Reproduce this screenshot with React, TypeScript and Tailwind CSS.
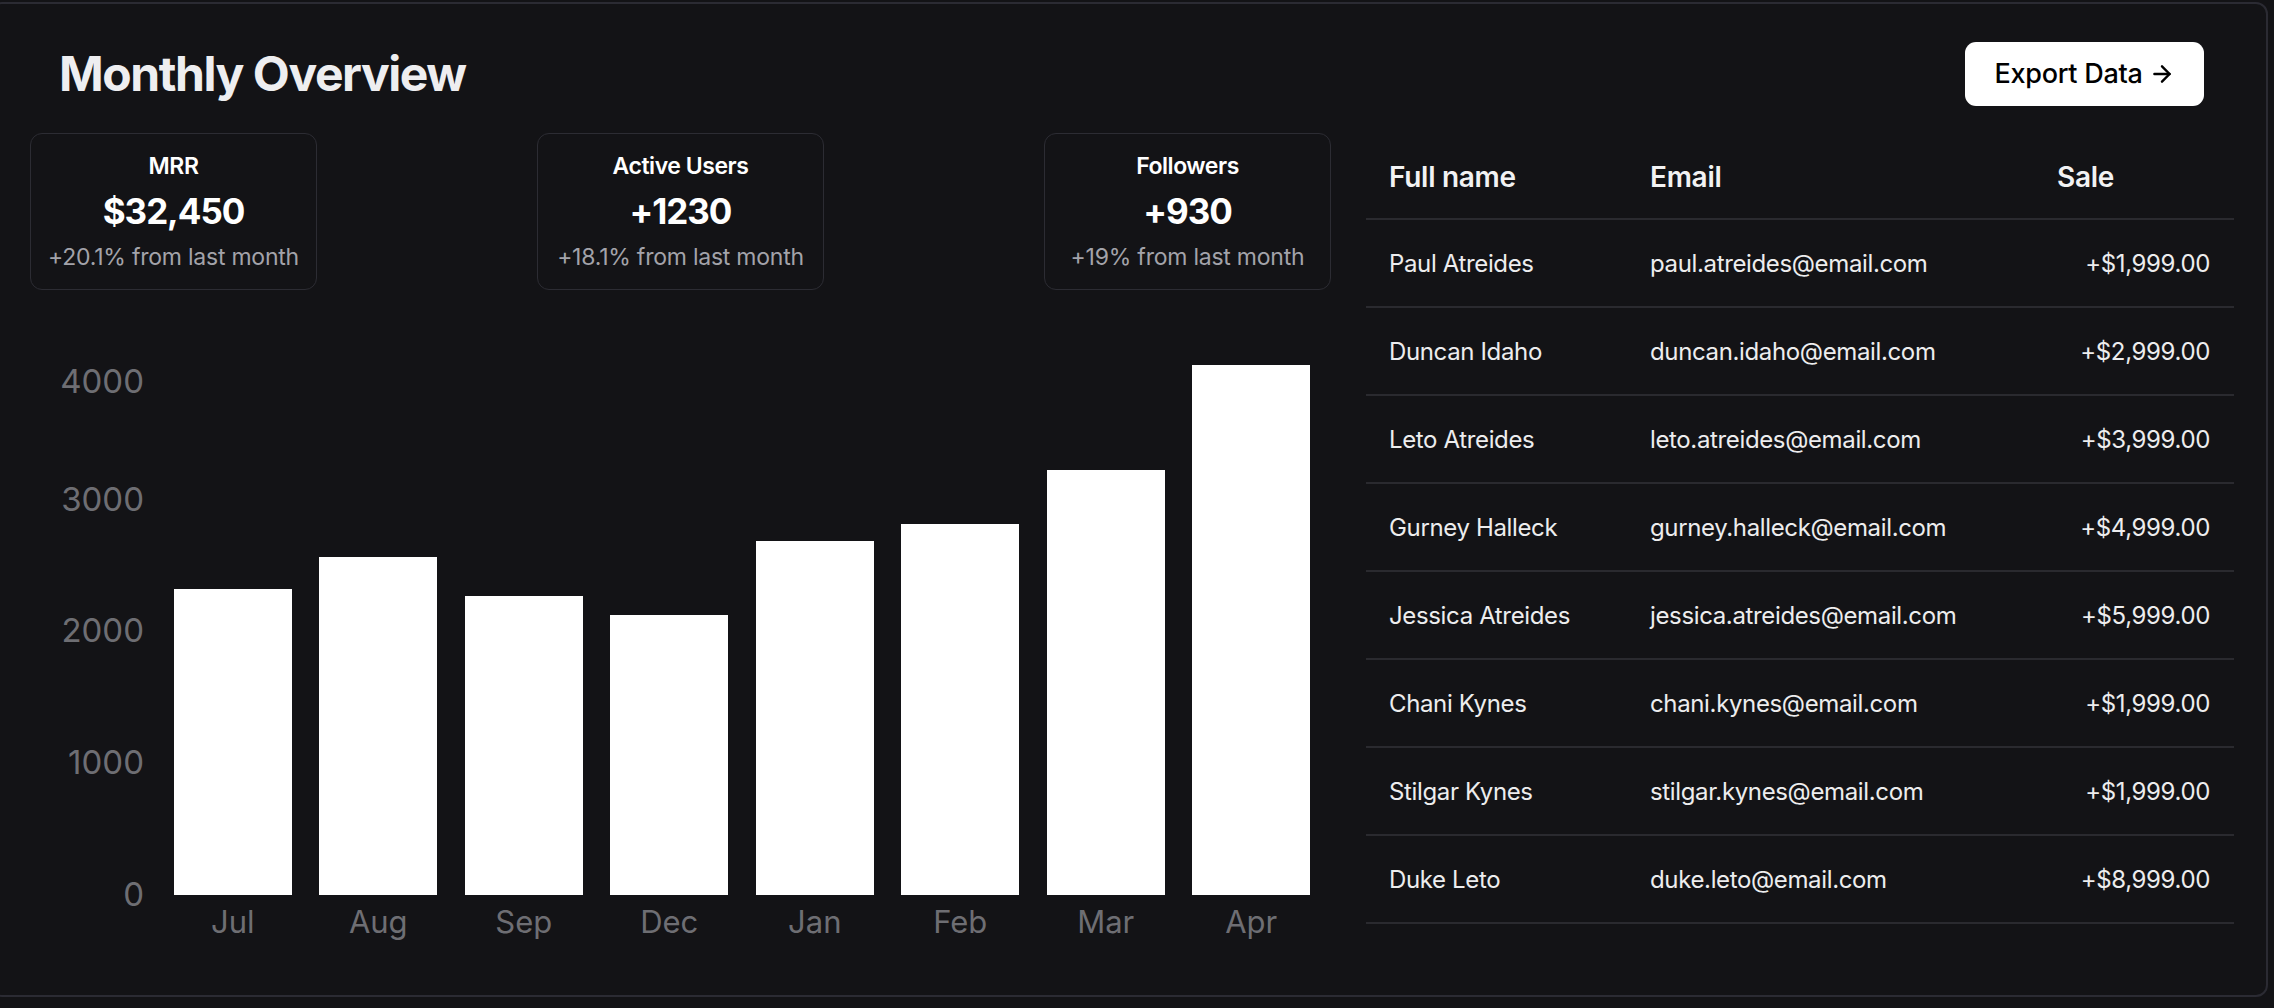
import { ArrowRight } from 'lucide-react';

const stats = [
  { label: 'MRR', value: '$32,450', change: '+20.1% from last month' },
  { label: 'Active Users', value: '+1230', change: '+18.1% from last month' },
  { label: 'Followers', value: '+930', change: '+19% from last month' },
];

// bar heights in px, read off the reference (0 -> 895px baseline)
const bars = [
  { month: 'Jul', height: 306 },
  { month: 'Aug', height: 338 },
  { month: 'Sep', height: 299 },
  { month: 'Dec', height: 280 },
  { month: 'Jan', height: 354 },
  { month: 'Feb', height: 371 },
  { month: 'Mar', height: 425 },
  { month: 'Apr', height: 530 },
];

const ticks = [
  { label: '4000', top: 72 },
  { label: '3000', top: 190 },
  { label: '2000', top: 321 },
  { label: '1000', top: 453 },
  { label: '0', top: 585 },
];

const sales = [
  { name: 'Paul Atreides', email: 'paul.atreides@email.com', amount: '+$1,999.00' },
  { name: 'Duncan Idaho', email: 'duncan.idaho@email.com', amount: '+$2,999.00' },
  { name: 'Leto Atreides', email: 'leto.atreides@email.com', amount: '+$3,999.00' },
  { name: 'Gurney Halleck', email: 'gurney.halleck@email.com', amount: '+$4,999.00' },
  { name: 'Jessica Atreides', email: 'jessica.atreides@email.com', amount: '+$5,999.00' },
  { name: 'Chani Kynes', email: 'chani.kynes@email.com', amount: '+$1,999.00' },
  { name: 'Stilgar Kynes', email: 'stilgar.kynes@email.com', amount: '+$1,999.00' },
  { name: 'Duke Leto', email: 'duke.leto@email.com', amount: '+$8,999.00' },
];

function StatCard({ label, value, change }: { label: string; value: string; change: string }) {
  return (
    <div className="w-[287px] h-[157px] rounded-[12px] border border-[#2c2c33] flex flex-col items-center pt-[17px]">
      <div className="text-[23px] leading-[30px] font-semibold tracking-[-0.02em] text-white">{label}</div>
      <div className="mt-[10px] text-[35px] leading-[40px] font-bold tracking-[-0.03em] text-white">{value}</div>
      <div className="mt-[12px] text-[23px] leading-[28px] tracking-[-0.01em] text-[#a3a3aa]">{change}</div>
    </div>
  );
}

function BarChart() {
  return (
    <div className="flex">
      {/* Y axis */}
      <div className="relative w-[130px] h-[605px] shrink-0">
        {ticks.map((t) => (
          <div
            key={t.label}
            className="absolute right-[16px] text-[33px] leading-[38px] text-[#6e6e73]"
            style={{ top: t.top }}
          >
            {t.label}
          </div>
        ))}
      </div>

      {/* Plot */}
      <div className="flex-1 pr-[7px]">
        <div className="h-[605px] flex items-end">
          {bars.map((b) => (
            <div key={b.month} className="flex-1 flex justify-center">
              <div className="w-[118px] bg-white" style={{ height: b.height }} />
            </div>
          ))}
        </div>
        <div className="mt-[8px] flex">
          {bars.map((b) => (
            <div key={b.month} className="flex-1 text-center text-[31px] leading-[38px] text-[#6e6e73]">
              {b.month}
            </div>
          ))}
        </div>
      </div>
    </div>
  );
}

function SalesTable() {
  return (
    <div className="w-[868px] shrink-0">
      <div className="h-[87px] pt-[2px] flex items-center border-b-2 border-[#2a2a2f] text-[28px] font-semibold tracking-[-0.01em] text-[#f2f2f3]">
        <div className="w-[261px] pl-[23px]">Full name</div>
        <div className="w-[407px] pl-[23px]">Email</div>
        <div className="flex-1 pl-[23px]">Sale</div>
      </div>
      {sales.map((s) => (
        <div
          key={s.name + s.amount}
          className="h-[88px] pt-[2px] flex items-center border-b-2 border-[#2a2a2f] text-[24px] tracking-[-0.015em] text-[#ededee]"
        >
          <div className="w-[261px] pl-[23px]">{s.name}</div>
          <div className="w-[407px] pl-[23px]">{s.email}</div>
          <div className="flex-1 pr-[24px] text-right">{s.amount}</div>
        </div>
      ))}
    </div>
  );
}

export default function App() {
  return (
    <div
      className="w-[2274px] h-[1008px] overflow-hidden bg-[#131316]"
      style={{ fontFamily: 'Inter, "Noto Sans", sans-serif' }}
    >
      <div className="ml-[-10px] mt-[2px] w-[2278px] h-[995px] rounded-[12px] border-2 border-[#2b2b33]">
        {/* Header */}
        <div className="flex items-center justify-between pl-[67px] pr-[62px] pt-[38px]">
          <h1 className="text-[48px] leading-[64px] font-bold tracking-[-0.03em] text-[#eeeef0]">Monthly Overview</h1>
          <button className="w-[239px] h-[64px] rounded-[11px] bg-white text-black flex items-center justify-center gap-[6px] text-[27px] font-medium tracking-[-0.01em]">
            Export Data
            <ArrowRight size={26} strokeWidth={2.25} />
          </button>
        </div>

        {/* Body */}
        <div className="flex pl-[38px] pr-[32px] pt-[27px] gap-[35px]">
          <div className="flex-1 flex flex-col">
            <div className="flex justify-between">
              {stats.map((s) => (
                <StatCard key={s.label} {...s} />
              ))}
            </div>
            <BarChart />
          </div>
          <SalesTable />
        </div>
      </div>
    </div>
  );
}
